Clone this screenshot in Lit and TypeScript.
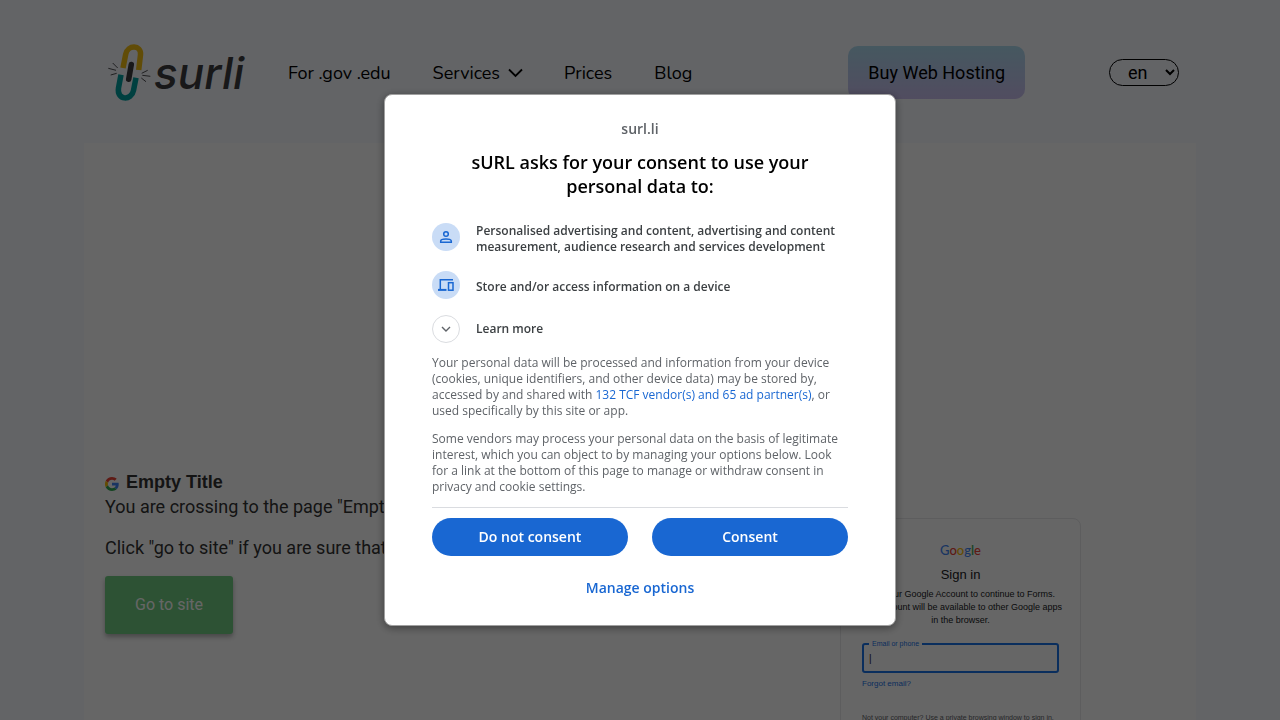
import { LitElement, html, css, svg } from "lit";
import { customElement } from "lit/decorators.js";

const linkMark = svg`
  <g fill="none" stroke-linecap="butt" stroke-width="5.5">
    <path stroke="#f2bd13" d="M16 24 L18.700 10.300 C20.500 0.500 34.500 0.500 33.500 10.800 L31.700 26" />
    <path stroke="#00a0a0" d="M14 30.800 L11.500 44 C9.500 56.500 24.500 57 26.500 46.500 L29 33.800" />
    <path stroke="#3d3d40" stroke-linecap="round" d="M24.300 20.500 L21.700 35.200" />
  </g>
  <g fill="none" stroke="#3d3d40" stroke-width="0.900">
    <path d="M5.700 19 L10.700 24 M1.300 24.300 L9 26.300 M3.700 31 L9.700 29.300 M34.700 29.300 L40.700 26.300 M35.300 31.300 L43.300 32.300 M34.300 34 L39 37.700" />
  </g>`;

@customElement("site-header")
export class SiteHeader extends LitElement {
  static styles = css`
    :host { display: block; }
    .bar {
      display: flex;
      align-items: center;
      box-sizing: border-box;
      max-width: 1112px;
      min-height: 143px;
      margin: 0 auto;
      padding: 2px 17px 0 23px;
      font-family: "Nunito", "Lato", sans-serif;
      font-size: 18px;
    }
    .logo { display: flex; align-items: center; width: 139px; color: #3d3d40; text-decoration: none; }
    .mark { flex: none; width: 44px; height: 58px; }
    .word { margin-left: 3px; font: italic 500 44px/58px "Inter", sans-serif; }
    .nav { display: flex; gap: 42px; margin-left: 42px; }
    .item { display: flex; align-items: center; gap: 8px; color: #000; line-height: 24px; text-decoration: none; }
    .chevron { width: 15px; height: 10px; margin-right: -1px; }
    .hosting {
      margin-left: auto;
      padding: 0 20px;
      border-radius: 10px;
      background: linear-gradient(#aedcf1, #cbbff0);
      color: #000;
      font: 400 18px/53px "Roboto", sans-serif;
      text-decoration: none;
    }
    .lang {
      width: 70px;
      height: 27px;
      margin-left: 84px;
      padding: 0 0 0 14px;
      border: 1px solid #000;
      border-radius: 14px;
      background: transparent;
      color: #000;
      font: 400 18px "Roboto", sans-serif;
    }
  `;

  render() {
    return html`
      <header class="bar">
        <a class="logo" href="#" aria-label="surli home">
          <svg class="mark" viewBox="0 0 44 58">${linkMark}</svg>
          <span class="word">surli</span>
        </a>
        <nav class="nav">
          <a class="item" href="#">For .gov .edu</a>
          <a class="item" href="#">Services
            <svg class="chevron" viewBox="0 0 15 10"><path d="M1 1.500 L7.500 8 L14 1.500" fill="none" stroke="#000" stroke-width="1.800" /></svg>
          </a>
          <a class="item" href="#">Prices</a>
          <a class="item" href="#">Blog</a>
        </nav>
        <a class="hosting" href="#">Buy Web Hosting</a>
        <select class="lang" aria-label="Language"><option>en</option><option>uk</option></select>
      </header>
    `;
  }
}

@customElement("site-preview")
export class SitePreview extends LitElement {
  static styles = css`
    :host { display: block; }
    .card {
      box-sizing: border-box;
      max-width: 241px;
      padding: 22px 21px;
      border: 1px solid #e8e8ea;
      border-radius: 8px;
      background: #fff;
      color: #202124;
      font: 400 9px/13px "Liberation Sans", sans-serif;
      text-align: center;
    }
    .brand { font: 500 13px/18px "Lato", sans-serif; }
    .blue { color: #4285f4; }
    .red { color: #ea4335; }
    .yellow { color: #fbbc05; }
    .green { color: #34a853; }
    .title { margin: 7px 0 4px; font-size: 13px; font-weight: 400; line-height: 18px; }
    .lead { margin: 0; white-space: nowrap; display: flex; flex-direction: column; align-items: center; }
    .field { margin: 13px 0 4px; padding: 0 5px; border: 2px solid #1a73e8; border-radius: 3px; text-align: left; }
    .legend { padding: 0 3px; color: #1a73e8; font-size: 7px; line-height: 8px; }
    .input {
      display: block;
      box-sizing: border-box;
      width: 100%;
      height: 23px;
      padding: 0 0 2px;
      border: 0;
      outline: 0;
      background: transparent;
      color: #202124;
      font: 400 10px "Liberation Sans", sans-serif;
    }
    .forgot { display: block; color: #1a73e8; font-size: 8px; text-align: left; text-decoration: none; }
    .note { margin: 21px 0 0; color: #5f6368; font-size: 7px; text-align: left; }
  `;

  render() {
    return html`
      <section class="card">
        <div class="brand"><span class="blue">G</span><span class="red">o</span><span class="yellow">o</span><span class="blue">g</span><span class="green">l</span><span class="red">e</span></div>
        <h2 class="title">Sign in</h2>
        <p class="lead">
          <span>Use your Google Account to continue to Forms.</span>
          <span>This account will be available to other Google apps</span>
          <span>in the browser.</span>
        </p>
        <fieldset class="field">
          <legend class="legend"><label for="email">Email or phone</label></legend>
          <input class="input" id="email" type="text" value="|" />
        </fieldset>
        <a class="forgot" href="#">Forgot email?</a>
        <p class="note">Not your computer? Use a private browsing window to sign in.</p>
      </section>
    `;
  }
}

@customElement("consent-dialog")
export class ConsentDialog extends LitElement {
  static styles = css`
    :host {
      position: fixed;
      inset: 0;
      display: flex;
      align-items: center;
      justify-content: center;
      background: rgba(0, 0, 0, 0.6);
      font-family: "Open Sans", sans-serif;
    }
    .dialog {
      box-sizing: border-box;
      width: 512px;
      max-width: 94%;
      padding: 24px 47px 27px;
      border: 1px solid #a0a0a0;
      border-radius: 8px;
      background: #fff;
      box-shadow: 0 2px 8px rgba(0, 0, 0, 0.4);
    }
    .site { margin: 0 0 11px; color: #5f6368; font-size: 14px; font-weight: 600; line-height: 20px; text-align: center; }
    .heading { margin: 0 24px 25px; color: #000; font-size: 18px; font-weight: 600; line-height: 24px; text-align: center; }
    .purposes { display: grid; gap: 16px; margin: 0 0 12px; padding: 0; list-style: none; }
    .purpose { display: flex; align-items: center; gap: 16px; min-height: 32px; color: #3c4043; font-size: 12px; font-weight: 600; line-height: 16px; }
    .disc { flex: none; align-self: flex-start; width: 28px; height: 28px; border-radius: 50%; background: #c9dcf6; }
    .glyph { display: block; width: 28px; height: 28px; }
    .more {
      display: flex;
      align-items: center;
      gap: 16px;
      padding: 0;
      border: 0;
      background: none;
      color: #3c4043;
      font: 600 12px/16px "Open Sans", sans-serif;
    }
    .ring { box-sizing: border-box; width: 28px; height: 28px; border: 1px solid #dadce0; border-radius: 50%; }
    .arrow { display: block; width: 26px; height: 26px; }
    .text { margin: 12px 0 0; color: #5f6368; font-size: 12px; line-height: 16px; }
    .link { color: #1967d2; text-decoration: none; }
    .actions { display: grid; grid-template-columns: 1fr 1fr; gap: 24px; margin-top: 12px; padding-top: 10px; border-top: 1px solid #dadce0; }
    .button {
      height: 38px;
      padding: 0;
      border: 0;
      border-radius: 19px;
      background: #1967d2;
      color: #fff;
      font: 600 14px/20px "Open Sans", sans-serif;
    }
    .manage {
      display: block;
      margin: 22px auto 0;
      padding: 0;
      border: 0;
      background: none;
      color: #1967d2;
      font: 600 14px/20px "Open Sans", sans-serif;
    }
  `;

  render() {
    return html`
      <div class="dialog" role="dialog" aria-modal="true" aria-labelledby="heading">
        <p class="site">surl.li</p>
        <h1 class="heading" id="heading">sURL asks for your consent to use your personal data to:</h1>
        <ul class="purposes">
          <li class="purpose">
            <span class="disc"><svg class="glyph" viewBox="0 0 28 28"><g fill="none" stroke="#1967d2" stroke-width="1.500"><circle cx="14" cy="11" r="2.300" /><path d="M8.700 19.200 V18.100 C8.700 15.300 19.300 15.300 19.300 18.100 V19.200 Z" /></g></svg></span>
            <span>Personalised advertising and content, advertising and content measurement, audience research and services development</span>
          </li>
          <li class="purpose">
            <span class="disc"><svg class="glyph" viewBox="0 0 28 28"><g fill="none" stroke="#1967d2" stroke-width="1.500"><path d="M21 8.700 H8.300 V18.800" /><path stroke-width="2" d="M6 18.900 H14.500" /><rect x="16.500" y="11.700" width="4.500" height="7.500" /></g></svg></span>
            <span>Store and/or access information on a device</span>
          </li>
        </ul>
        <button class="more" type="button">
          <span class="ring"><svg class="arrow" viewBox="0 0 26 26"><path d="M9 11 L13 15 L17 11" fill="none" stroke="#5f6368" stroke-width="1.400" /></svg></span>
          <span>Learn more</span>
        </button>
        <p class="text">Your personal data will be processed and information from your device (cookies, unique identifiers, and other device data) may be stored by, accessed by and shared with <a class="link" href="#">132 TCF vendor(s) and 65 ad partner(s)</a>, or used specifically by this site or app.</p>
        <p class="text">Some vendors may process your personal data on the basis of legitimate interest, which you can object to by managing your options below. Look for a link at the bottom of this page to manage or withdraw consent in privacy and cookie settings.</p>
        <div class="actions">
          <button class="button" type="button">Do not consent</button>
          <button class="button" type="button">Consent</button>
        </div>
        <button class="manage" type="button">Manage options</button>
      </div>
    `;
  }
}

@customElement("app-root")
export class AppRoot extends LitElement {
  static styles = css`
    :host { display: block; height: 100vh; overflow: hidden; background: #f7f9ff; }
    .content {
      display: grid;
      grid-template-columns: minmax(0, 1fr) 241px;
      column-gap: 40px;
      box-sizing: border-box;
      max-width: 1112px;
      margin: 0 auto;
      padding: 329px 115px 60px 21px;
      background: #fff;
      color: #333;
      font: 400 18px/27px "Roboto", sans-serif;
    }
    .title { display: flex; align-items: center; gap: 6px; margin: 0; font: 700 18px/21px "Liberation Sans", sans-serif; }
    .favicon { width: 14px; height: 14px; margin: 3px 1px 0 0; }
    .line { margin: 0 0 14px; }
    .go {
      width: 128px;
      height: 58px;
      margin-top: 1px;
      padding: 0;
      border: 0;
      border-radius: 3px;
      background: #70ce82;
      box-shadow: 0 3px 5px rgba(0, 0, 0, 0.3);
      color: #fff;
      font: 400 16px/24px "Roboto", sans-serif;
    }
    .preview { margin-top: 46px; }
  `;

  render() {
    return html`
      <site-header></site-header>
      <main class="content">
        <div>
          <h2 class="title">
            <svg class="favicon" viewBox="0 0 48 48">
              <path fill="#ea4335" d="M24 9.500c3.500 0 6.700 1.200 9.200 3.600l6.900-6.900C35.900 2.400 30.500 0 24 0 14.600 0 6.500 5.400 2.600 13.200l8 6.200C12.400 13.700 17.700 9.500 24 9.500z" />
              <path fill="#4285f4" d="M47 24.600c0-1.600-.2-3.100-.4-4.600H24v9h12.900c-.6 3-2.200 5.500-4.700 7.200l7.700 6C44.400 38 47 31.800 47 24.600z" />
              <path fill="#fbbc05" d="M10.500 28.600c-.5-1.500-.8-3-.8-4.600s.3-3.100.8-4.600l-8-6.200C.9 16.500 0 20.100 0 24s.9 7.500 2.600 10.800z" />
              <path fill="#34a853" d="M24 48c6.500 0 11.900-2.100 15.900-5.800l-7.700-6c-2.200 1.500-4.900 2.300-8.200 2.300-6.300 0-11.600-4.200-13.500-9.900l-8 6.200C6.500 42.600 14.600 48 24 48z" />
            </svg>
            Empty Title
          </h2>
          <p class="line">You are crossing to the page "Empty Title"</p>
          <p class="line">Click "go to site" if you are sure that you want to go</p>
          <button class="go" type="button">Go to site</button>
        </div>
        <site-preview class="preview"></site-preview>
      </main>
      <consent-dialog></consent-dialog>
    `;
  }
}
